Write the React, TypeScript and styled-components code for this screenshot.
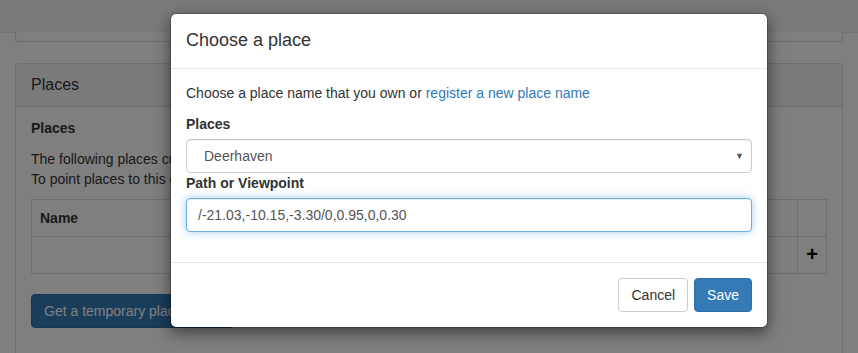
import React from 'react';
import styled, { createGlobalStyle } from 'styled-components';

const TEXT = '#333';
const BORDER = '#ddd';
const PRIMARY = '#337ab7';

const GlobalStyle = createGlobalStyle`
  html, body {
    margin: 0;
    padding: 0;
    background: #fff;
    font-family: 'Liberation Sans', Arial, sans-serif;
    font-size: 14px;
    line-height: 20px;
    color: ${TEXT};
  }
  * { box-sizing: border-box; }
`;

const Page = styled.div`
  width: 858px;
  height: 353px;
  overflow: hidden;
  position: relative;
`;

const TopBar = styled.div`
  height: 33px;
  background: #f5f5f5;
  border-bottom: 1px solid #e7e7e7;
`;

const PanelTail = styled.div`
  margin: -1px 15px 0;
  height: 10px;
  border: 1px solid ${BORDER};
  border-top: none;
  border-radius: 0 0 4px 4px;
  background: #fff;
`;

const Panel = styled.div`
  margin: 21px 15px 0;
  border: 1px solid ${BORDER};
  border-radius: 4px 4px 0 0;
  height: 320px;
`;

const PanelHeading = styled.div`
  height: 43px;
  padding: 0 15px;
  display: flex;
  align-items: center;
  background: #f5f5f5;
  border-bottom: 1px solid ${BORDER};
  border-radius: 3px 3px 0 0;
  font-size: 16px;
`;

const PanelBody = styled.div`
  padding: 11px 15px 15px;
`;

const SubTitle = styled.div`
  font-weight: bold;
  margin-bottom: 11px;
`;

const Para = styled.p<{ gap?: number }>`
  margin: 0 0 ${({ gap }) => gap ?? 10}px;
  color: ${TEXT};
`;

const Table = styled.table`
  width: 100%;
  border-collapse: collapse;
  margin-bottom: 20px;
`;

const Cell = styled.td<{ narrow?: boolean; head?: boolean }>`
  border: 1px solid ${BORDER};
  height: 37px;
  padding: 0 8px;
  font-weight: ${({ head }) => (head ? 'bold' : 'normal')};
  width: ${({ narrow }) => (narrow ? '29px' : 'auto')};
  text-align: ${({ narrow }) => (narrow ? 'center' : 'left')};
`;

const PlusGlyph = styled.span`
  font-size: 20px;
  font-weight: bold;
  color: #000;
`;

const Button = styled.button<{ primary?: boolean }>`
  height: 34px;
  padding: 0 12px;
  font-family: inherit;
  font-size: 14px;
  border-radius: 4px;
  border: 1px solid ${({ primary }) => (primary ? '#2e6da4' : '#ccc')};
  background: ${({ primary }) => (primary ? PRIMARY : '#fff')};
  color: ${({ primary }) => (primary ? '#fff' : TEXT)};
  cursor: pointer;
`;

const Backdrop = styled.div`
  position: absolute;
  inset: 0;
  background: rgba(0, 0, 0, 0.5);
`;

const Modal = styled.div`
  position: absolute;
  left: 170px;
  top: 13px;
  width: 598px;
  background: #fff;
  border: 1px solid rgba(0, 0, 0, 0.2);
  border-radius: 6px;
  box-shadow: 0 5px 15px rgba(0, 0, 0, 0.5);
  background-clip: padding-box;
`;

const ModalHeader = styled.div`
  padding: 14px 15px 15px;
  border-bottom: 1px solid #e5e5e5;
`;

const ModalTitle = styled.h4`
  margin: 0;
  font-size: 18px;
  font-weight: normal;
  line-height: 25px;
  color: #333;
`;

const ModalBody = styled.div`
  padding: 14px 15px 0;
`;

const FormGroup = styled.div<{ last?: boolean }>`
  margin-bottom: ${({ last }) => (last ? '30px' : '0')};
`;

const Label = styled.label`
  display: block;
  font-weight: bold;
  margin-bottom: 5px;
`;

const Link = styled.a`
  color: ${PRIMARY};
  text-decoration: none;
`;

const SelectWrap = styled.div`
  position: relative;
`;

const Select = styled.select`
  display: block;
  width: 100%;
  height: 34px;
  padding: 0 12px 0 17px;
  font-family: inherit;
  font-size: 14px;
  color: #555;
  background: #fff;
  border: 1px solid #ccc;
  border-radius: 4px;
  box-shadow: inset 0 1px 1px rgba(0, 0, 0, 0.075);
  appearance: none;
  outline: none;
`;

const Caret = styled.span`
  position: absolute;
  right: 8px;
  top: 50%;
  transform: translateY(-50%);
  font-size: 9px;
  color: #555;
  pointer-events: none;
`;

const Input = styled.input`
  display: block;
  width: 100%;
  height: 34px;
  padding: 0 11px;
  font-family: inherit;
  font-size: 14px;
  color: #555;
  background: #fff;
  border: 1px solid #66afe9;
  border-radius: 4px;
  box-shadow: inset 0 1px 1px rgba(0, 0, 0, 0.075), 0 0 8px rgba(102, 175, 233, 0.6);
  outline: none;
`;

const ModalFooter = styled.div`
  display: flex;
  justify-content: flex-end;
  gap: 6px;
  padding: 15px;
  border-top: 1px solid #e5e5e5;
`;

const App: React.FC = () => {
  return (
    <Page>
      <GlobalStyle />
      <TopBar />
      <PanelTail />
      <Panel>
        <PanelHeading>Places</PanelHeading>
        <PanelBody>
          <SubTitle>Places</SubTitle>
          <Para>
            The following places currently point to this domain.
            <br />
            To point places to this domain, choose a place name below.
          </Para>
          <Table>
            <tbody>
              <tr>
                <Cell head>Name</Cell>
                <Cell narrow />
              </tr>
              <tr>
                <Cell />
                <Cell narrow>
                  <PlusGlyph>+</PlusGlyph>
                </Cell>
              </tr>
            </tbody>
          </Table>
          <Button primary>Get a temporary place name</Button>
        </PanelBody>
      </Panel>

      <Backdrop />

      <Modal>
        <ModalHeader>
          <ModalTitle>Choose a place</ModalTitle>
        </ModalHeader>
        <ModalBody>
          <Para gap={11}>
            Choose a place name that you own or <Link href="#">register a new place name</Link>
          </Para>
          <FormGroup>
            <Label>Places</Label>
            <SelectWrap>
              <Select defaultValue="Deerhaven">
                <option>Deerhaven</option>
              </Select>
              <Caret>▼</Caret>
            </SelectWrap>
          </FormGroup>
          <FormGroup last>
            <Label>Path or Viewpoint</Label>
            <Input defaultValue="/-21.03,-10.15,-3.30/0,0.95,0,0.30" />
          </FormGroup>
        </ModalBody>
        <ModalFooter>
          <Button>Cancel</Button>
          <Button primary>Save</Button>
        </ModalFooter>
      </Modal>
    </Page>
  );
};

export default App;
